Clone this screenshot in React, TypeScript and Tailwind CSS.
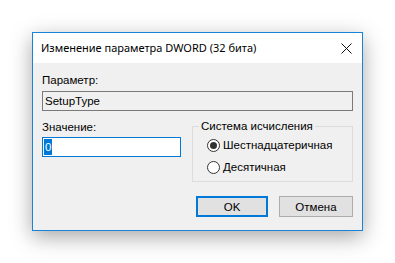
import React from "react";

const dlgFont = { fontFamily: '"Liberation Sans", Arial, sans-serif' };
const titleFont = { fontFamily: '"Noto Sans", "Liberation Sans", sans-serif' };

function Radio({ checked, label }: { checked: boolean; label: string }) {
  return (
    <div className="flex h-[20px] items-center">
      <span className="ml-[8px] flex h-[13px] w-[13px] items-center justify-center rounded-full border border-[#333] bg-white">
        {checked && <span className="h-[7px] w-[7px] rounded-full bg-[#333]" />}
      </span>
      <span className="ml-[3px] text-[11.5px] leading-[16px] text-black">{label}</span>
    </div>
  );
}

export default function App() {
  return (
    <div className="h-[263px] w-[395px] bg-white pl-[32px] pt-[32px]" style={dlgFont}>
      <div className="w-[331px] border border-[#1883d7] bg-[#f0f0f0] shadow-[0_6px_20px_rgba(0,0,0,0.35)]">
        <div className="flex h-[30px] items-center justify-between bg-white pl-[8px] pr-[10px]">
          <span className="text-[11px] leading-[16px] text-black" style={titleFont}>
            Изменение параметра DWORD (32 бита)
          </span>
          <svg width="11" height="11" viewBox="0 0 11 11">
            <path d="M0.5 0.5 L10.5 10.5 M10.5 0.5 L0.5 10.5" stroke="#111" strokeWidth="1" fill="none" />
          </svg>
        </div>

        <div className="px-[9px] pb-[13px] pt-[9px] text-[11.5px] leading-[16px] text-black">
          <div>Параметр:</div>
          <div className="mt-[3px] flex h-[20px] items-center border border-[#7a7a7a] bg-[#f0f0f0] px-[2px]">
            SetupType
          </div>

          <div className="mt-[8px] flex items-start gap-[11px]">
            <div className="w-[139px]">
              <div>Значение:</div>
              <div className="mt-[2px] flex h-[20px] items-center border border-[#0078d7] bg-white px-[1px]">
                <span className="bg-[#0078d7] px-[1px] text-white">0</span>
              </div>
            </div>

            <fieldset className="-mt-px w-[161px] border border-[#dcdcdc] px-[6px] pb-[4px]">
              <legend className="px-[2px] leading-[16px]">Система исчисления</legend>
              <div className="mt-[1px]">
                <Radio checked label="Шестнадцатеричная" />
              </div>
              <div className="mt-[2px]">
                <Radio checked={false} label="Десятичная" />
              </div>
            </fieldset>
          </div>

          <div className="mt-[14px] flex justify-end gap-[11px]">
            <button className="flex h-[21px] w-[72px] items-center justify-center border-2 border-[#0078d7] bg-[#e1e1e1] text-[11.5px]">
              OK
            </button>
            <button className="flex h-[21px] w-[74px] items-center justify-center border border-[#adadad] bg-[#e1e1e1] text-[11.5px]">
              Отмена
            </button>
          </div>
        </div>
      </div>
    </div>
  );
}
